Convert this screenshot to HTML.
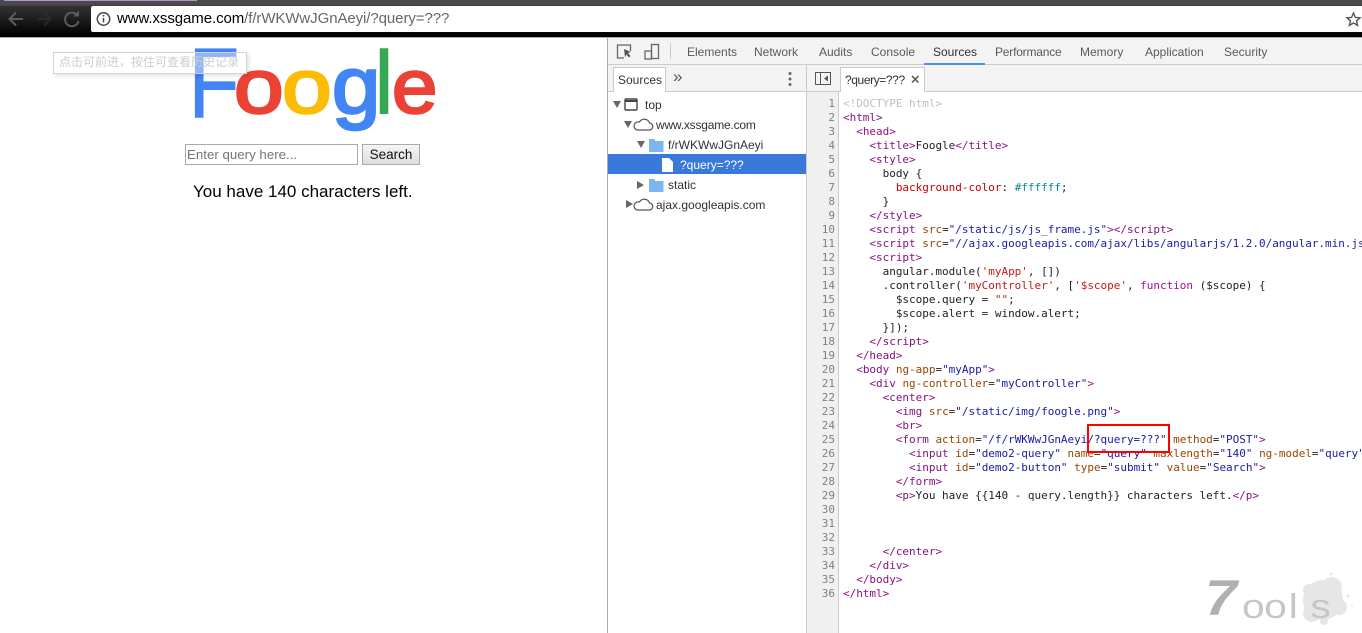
<!DOCTYPE html>
<html><head><meta charset="utf-8"><title>Foogle</title>
<style>
html,body{margin:0;padding:0;background:#fff}
body{width:1362px;height:633px;overflow:hidden;position:relative;font-family:"Liberation Sans","Noto Sans CJK SC",sans-serif}
.abs,.tab,.nav,.ln,.cl{position:absolute;white-space:pre}
.tab{top:44px;font-size:12px;line-height:16px;color:#5a5a5a}
.nav{font-size:12px;line-height:16px;color:#303030}
.ln{left:807px;width:28px;text-align:right;font:11px/14px "DejaVu Sans Mono",monospace;letter-spacing:-.02px;color:#808080}
.cl{left:843px;font:11px/14px "DejaVu Sans Mono",monospace;letter-spacing:-.02px;color:#222}
.t{color:#881280}.a{color:#994500}.v{color:#1a1aa6}.d{color:#c0c0c0}.p{color:#c80000}.h{color:#008a9a}.k{color:#aa0d91}.s{color:#c41a16}
</style></head><body>
<div class="abs" style="left:0;top:0;width:1362px;height:37px;background:linear-gradient(#4a4a4a 0,#4a4a4a 5px,#333 6px,#000 36px)"></div>
<div class="abs" style="left:4px;top:0;width:193px;height:1px;background:#b78fd0"></div>
<div class="abs" style="left:91px;top:6px;width:1271px;height:26px;background:#fff;border-radius:2px 0 0 2px"></div>
<div class="abs" style="left:0;top:37px;width:1362px;height:1px;background:#aaa"></div>
<svg class="abs" style="left:0;top:0" width="130" height="37" fill="none">
<path d="M23 19H10M16 12.500L9.500 19l6.500 6.500" stroke="#5c5c5c" stroke-width="2"/>
<path d="M38 19h12M44.500 13l6 6-6 6" stroke="#2c2c2c" stroke-width="2"/>
<path d="M77 15a6.800 6.800 0 1 0 1.500 6" stroke="#5c5c5c" stroke-width="2"/><path d="M79 10.500v6h-6z" fill="#5c5c5c"/>
<circle cx="103.500" cy="19" r="6.200" stroke="#444" stroke-width="1.500"/><path d="M103.500 18v4.500M103.500 15v1.500" stroke="#444" stroke-width="1.500"/>
</svg>
<div class="abs" style="left:117px;top:10px;font-size:15px;line-height:18px;color:#000;letter-spacing:-.08px">www.xssgame.com<span style="color:#666">/f/rWKWwJGnAeyi/?query=???</span></div>
<svg class="abs" style="left:1344px;top:10px" width="18" height="18" fill="none"><path d="M9.500 3l1.900 4.400 4.600.4-3.500 3 1.100 4.600-4.100-2.500-4.100 2.500 1.100-4.600-3.500-3 4.600-.4z" stroke="#555" stroke-width="1.400"/></svg>

<svg class="abs" style="left:0;top:0" width="607" height="150" font-family="Liberation Sans, sans-serif">
<text transform="translate(188.500 117) scale(.84 1)" font-size="99" fill="#4285f4" stroke="#4285f4" stroke-width="1">F</text>
<g stroke-width="2.500" font-size="77">
<text transform="translate(234 113) scale(1.160 1)" fill="#ea4335" stroke="#ea4335">o</text>
<text transform="translate(282 113) scale(1.160 1)" fill="#fbbc05" stroke="#fbbc05">o</text>
<text transform="translate(332 113) scale(1.130 1.050)" fill="#4285f4" stroke="#4285f4">g</text>
<text transform="translate(392 113) scale(1.060 1)" fill="#ea4335" stroke="#ea4335">e</text>
</g>
<text x="374" y="114" font-size="90" fill="#34a853" stroke="#34a853" stroke-width=".6">l</text>
</svg>
<div class="abs" style="left:53px;top:52px;width:192px;height:20px;border:1px solid #d4d4d4;background:rgba(255,255,255,.4);box-shadow:2px 2px 4px rgba(0,0,0,.12)"></div>
<div class="abs" style="left:59px;top:54px;font-size:12px;line-height:17px;color:#cdcdcd">点击可前进，按住可查看历史记录</div>
<div class="abs" style="left:185px;top:144px;width:171px;height:19px;border:1px solid #a9a9a9;background:#fff"></div>
<div class="abs" style="left:187px;top:146px;font-size:13.300px;line-height:17px;color:#757575">Enter query here...</div>
<div class="abs" style="left:362px;top:144px;width:56px;height:19px;border:1px solid #aaa;background:linear-gradient(#f6f6f6,#ddd);font-size:13.500px;line-height:19px;text-align:center;color:#111">Search</div>
<div class="abs" style="left:193px;top:182px;font-size:17px;line-height:20px;color:#000">You have 140 characters left.</div>

<div class="abs" style="left:607px;top:38px;width:1px;height:595px;background:#a9a9a9"></div>
<div class="abs" style="left:608px;top:38px;width:754px;height:26px;background:#f3f3f3;border-bottom:1px solid #ccc"></div>
<div class="abs" style="left:608px;top:65px;width:754px;height:26px;background:#f3f3f3;border-bottom:1px solid #ccc"></div>
<div class="abs" style="left:806px;top:65px;width:1px;height:568px;background:#ccc"></div>
<div class="abs" style="left:807px;top:92px;width:31px;height:541px;background:#f0f0f0;border-right:1px solid #ccc"></div>
<svg class="abs" style="left:608px;top:38px" width="80" height="26" fill="none">
<path d="M16 20h-6.500v-13h13v6" stroke="#666" stroke-width="1.300"/><path d="M16 11l7 3-3 1 2.500 3-1.500 1.500-2.500-3-1.500 2.500z" fill="#555"/>
<rect x="43.500" y="6.500" width="7" height="14" stroke="#666" stroke-width="1.300"/><rect x="37" y="13" width="6.500" height="8" stroke="#666" stroke-width="1.300"/>
<path d="M62.500 5v16" stroke="#ccc"/>
</svg>
<span class="tab" style="left:687px">Elements</span><span class="tab" style="left:754px">Network</span><span class="tab" style="left:819px">Audits</span><span class="tab" style="left:871px">Console</span><span class="tab" style="left:933px;color:#333">Sources</span><span class="tab" style="left:995px;letter-spacing:-.2px">Performance</span><span class="tab" style="left:1080px">Memory</span><span class="tab" style="left:1145px">Application</span><span class="tab" style="left:1224px">Security</span>
<div class="abs" style="left:924px;top:63px;width:61px;height:2px;background:#4d90e8"></div>

<div class="abs" style="left:613px;top:67px;width:51px;height:24px;background:#fff;border:1px solid #ccc;border-bottom:0"></div>
<span class="tab" style="left:618px;top:72px;color:#333">Sources</span>
<span class="abs" style="left:673px;top:68px;font-size:17px;line-height:18px;color:#555">»</span>
<svg class="abs" style="left:784px;top:71px" width="12" height="16"><circle cx="6" cy="2.500" r="1.500" fill="#666"/><circle cx="6" cy="8" r="1.500" fill="#666"/><circle cx="6" cy="13.500" r="1.500" fill="#666"/></svg>
<svg class="abs" style="left:815px;top:71px" width="20" height="16" fill="none"><rect x=".5" y="1.500" width="15" height="12" stroke="#555"/><path d="M5.500 2v11" stroke="#555"/><path d="M13 4.500v6l-4-3z" fill="#555"/></svg>
<div class="abs" style="left:840px;top:67px;width:83px;height:24px;background:#fff;border:1px solid #ccc;border-bottom:0"></div>
<span class="tab" style="left:845px;top:72px;color:#333;letter-spacing:-.4px">?query=???</span>
<svg class="abs" style="left:911px;top:75px" width="10" height="10"><path d="M1 1l6.500 6.500M7.500 1l-6.500 6.500" stroke="#555" stroke-width="1.500"/></svg>

<div class="abs" style="left:608px;top:154px;width:198px;height:20px;background:#3879d9"></div>
<svg class="abs" style="left:608px;top:92px" width="198" height="124">
<g fill="#666"><path d="M5 9h8l-4 7z"/><path d="M16 29h8l-4 7z"/><path d="M29 49h8l-4 7z"/><path d="M29 89l7 4-7 4z"/><path d="M18 108l7 4-7 4z"/></g>
<rect x="17" y="7" width="12" height="11" rx="1" fill="none" stroke="#444" stroke-width="1.400"/><path d="M17 8h12v2h-12z" fill="#444"/>
<g fill="none" stroke="#555" stroke-width="1.200"><path d="M31 38h12a3.500 3.500 0 0 0 .5-7 5.500 5.500 0 0 0-10-1 4 4 0 0 0-2.500 8z" transform="translate(-2 0)"/><path d="M31 38h12a3.500 3.500 0 0 0 .5-7 5.500 5.500 0 0 0-10-1 4 4 0 0 0-2.500 8z" transform="translate(-2 80)"/></g>
<path d="M41 47h5l1.500 2h8v11h-14.500z" fill="#7db4f2"/><path d="M41 87h5l1.500 2h8v11h-14.500z" fill="#7db4f2"/>
<path d="M54 66h7l4 4v10h-11z" fill="#fff"/>
</svg>
<span class="nav" style="left:645px;top:97px">top</span>
<span class="nav" style="left:656px;top:117px;letter-spacing:-.2px">www.xssgame.com</span>
<span class="nav" style="left:668px;top:137px">f/rWKWwJGnAeyi</span>
<span class="nav" style="left:680px;top:157px;color:#fff">?query=???</span>
<span class="nav" style="left:668px;top:177px">static</span>
<span class="nav" style="left:656px;top:197px">ajax.googleapis.com</span>

<div class="ln" style="top:97px">1
2
3
4
5
6
7
8
9
10
11
12
13
14
15
16
17
18
19
20
21
22
23
24
25
26
27
28
29
30
31
32
33
34
35
36</div>
<div class="cl" style="top:97px;width:519px;overflow:hidden"><span class="d">&lt;!DOCTYPE html&gt;</span>
<span class="t">&lt;html&gt;</span>
  <span class="t">&lt;head&gt;</span>
    <span class="t">&lt;title&gt;</span>Foogle<span class="t">&lt;/title&gt;</span>
    <span class="t">&lt;style&gt;</span>
      body {
        <span class="p">background-color</span>: <span class="h">#ffffff</span>;
      }
    <span class="t">&lt;/style&gt;</span>
    <span class="t">&lt;script</span> <span class="a">src</span>=<span class="v">"/static/js/js_frame.js"</span><span class="t">&gt;&lt;/script&gt;</span>
    <span class="t">&lt;script</span> <span class="a">src</span>=<span class="v">"//ajax.googleapis.com/ajax/libs/angularjs/1.2.0/angular.min.js"</span><span class="t">&gt;&lt;/script&gt;</span>
    <span class="t">&lt;script&gt;</span>
      angular.module(<span class="s">'myApp'</span>, [])
      .controller(<span class="s">'myController'</span>, [<span class="s">'$scope'</span>, <span class="k">function</span> ($scope) {
        $scope.query = <span class="s">""</span>;
        $scope.alert = window.alert;
      }]);
    <span class="t">&lt;/script&gt;</span>
  <span class="t">&lt;/head&gt;</span>
  <span class="t">&lt;body</span> <span class="a">ng-app</span>=<span class="v">"myApp"</span><span class="t">&gt;</span>
    <span class="t">&lt;div</span> <span class="a">ng-controller</span>=<span class="v">"myController"</span><span class="t">&gt;</span>
      <span class="t">&lt;center&gt;</span>
        <span class="t">&lt;img</span> <span class="a">src</span>=<span class="v">"/static/img/foogle.png"</span><span class="t">&gt;</span>
        <span class="t">&lt;br&gt;</span>
        <span class="t">&lt;form</span> <span class="a">action</span>=<span class="v">"/f/rWKWwJGnAeyi/?query=???"</span> <span class="a">method</span>=<span class="v">"POST"</span><span class="t">&gt;</span>
          <span class="t">&lt;input</span> <span class="a">id</span>=<span class="v">"demo2-query"</span> <span class="a">name</span>=<span class="v">"query"</span> <span class="a">maxlength</span>=<span class="v">"140"</span> <span class="a">ng-model</span>=<span class="v">"query"</span> <span class="a">placeholder</span>=<span class="v">"Enter query here..."</span><span class="t">&gt;</span>
          <span class="t">&lt;input</span> <span class="a">id</span>=<span class="v">"demo2-button"</span> <span class="a">type</span>=<span class="v">"submit"</span> <span class="a">value</span>=<span class="v">"Search"</span><span class="t">&gt;</span>
        <span class="t">&lt;/form&gt;</span>
        <span class="t">&lt;p&gt;</span>You have {{140 - query.length}} characters left.<span class="t">&lt;/p&gt;</span>



      <span class="t">&lt;/center&gt;</span>
    <span class="t">&lt;/div&gt;</span>
  <span class="t">&lt;/body&gt;</span>
<span class="t">&lt;/html&gt;</span></div>
<div class="abs" style="left:1087px;top:424px;width:79px;height:25px;border:2px solid #f00"></div>

<svg class="abs" style="left:1190px;top:560px" width="172" height="73" font-family="Liberation Sans, sans-serif">
<g fill="#e6e6e6"><circle cx="133" cy="40" r="20"/><circle cx="142" cy="27" r="10"/><circle cx="122" cy="53" r="9"/><circle cx="149" cy="47" r="8"/><circle cx="119" cy="30" r="6"/><circle cx="134" cy="61" r="4"/><circle cx="158" cy="36" r="1.500"/><circle cx="162" cy="46" r="1"/><circle cx="141" cy="14" r="1.500"/></g>
<text transform="translate(15 55) scale(1.150 1)" font-size="50" font-weight="bold" font-style="italic" fill="#b0b0b0">7</text>
<text transform="translate(52 58) scale(1.200 1)" font-size="34" fill="#c6c6c6" x="0 18.500 39 57">ools</text>
</svg>
</body></html>
